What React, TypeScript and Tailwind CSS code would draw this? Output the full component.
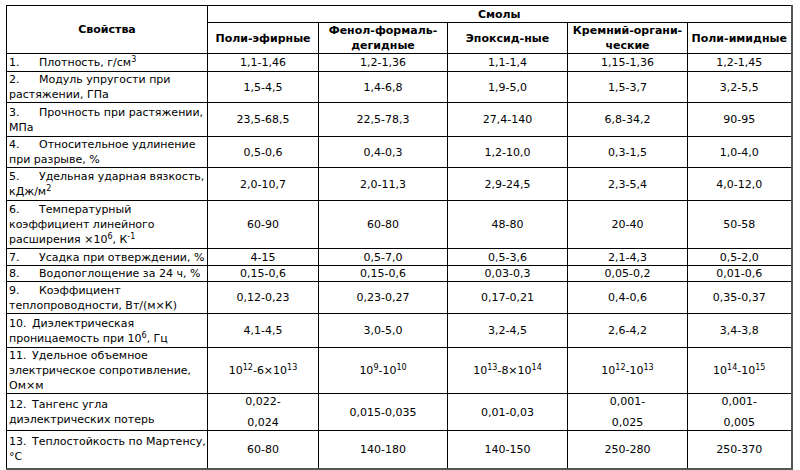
import type { ReactNode } from "react";

type Row = {
  n: string;
  label: ReactNode;
  values: ReactNode[];
  h: string;
};

const S = ({ children }: { children: ReactNode }) => (
  <sup className="text-[8px]">{children}</sup>
);

const Two = ({ a, b }: { a: string; b: string }) => (
  <div className="flex flex-col items-center gap-[6px]">
    <span>{a}</span>
    <span>{b}</span>
  </div>
);

const rows: Row[] = [
  {
    n: "1.",
    label: (
      <>
        Плотность, г/см<S>3</S>
      </>
    ),
    values: ["1,1-1,46", "1,2-1,36", "1,1-1,4", "1,15-1,36", "1,2-1,45"],
    h: "h-[18px]",
  },
  {
    n: "2.",
    label: (
      <>
        Модуль упругости при
        <br />
        растяжении, ГПа
      </>
    ),
    values: ["1,5-4,5", "1,4-6,8", "1,9-5,0", "1,5-3,7", "3,2-5,5"],
    h: "h-[30px]",
  },
  {
    n: "3.",
    label: (
      <>
        Прочность при растяжении,
        <br />
        МПа
      </>
    ),
    values: ["23,5-68,5", "22,5-78,3", "27,4-140", "6,8-34,2", "90-95"],
    h: "h-[34px]",
  },
  {
    n: "4.",
    label: (
      <>
        Относительное удлинение
        <br />
        при разрыве, %
      </>
    ),
    values: ["0,5-0,6", "0,4-0,3", "1,2-10,0", "0,3-1,5", "1,0-4,0"],
    h: "h-[30px]",
  },
  {
    n: "5.",
    label: (
      <>
        Удельная ударная вязкость,
        <br />
        кДж/м<S>2</S>
      </>
    ),
    values: ["2,0-10,7", "2,0-11,3", "2,9-24,5", "2,3-5,4", "4,0-12,0"],
    h: "h-[33px]",
  },
  {
    n: "6.",
    label: (
      <>
        Температурный
        <br />
        коэффициент линейного
        <br />
        расширения ×10<S>6</S>, К<S>-1</S>
      </>
    ),
    values: ["60-90", "60-80", "48-80", "20-40", "50-58"],
    h: "h-[48px]",
  },
  {
    n: "7.",
    label: "Усадка при отверждении, %",
    values: ["4-15", "0,5-7,0", "0,5-3,6", "2,1-4,3", "0,5-2,0"],
    h: "h-[17px]",
  },
  {
    n: "8.",
    label: "Водопоглощение за 24 ч, %",
    values: ["0,15-0,6", "0,15-0,6", "0,03-0,3", "0,05-0,2", "0,01-0,6"],
    h: "h-[16px]",
  },
  {
    n: "9.",
    label: (
      <>
        Коэффициент
        <br />
        теплопроводности, Вт/(м×К)
      </>
    ),
    values: ["0,12-0,23", "0,23-0,27", "0,17-0,21", "0,4-0,6", "0,35-0,37"],
    h: "h-[32px]",
  },
  {
    n: "10.",
    label: (
      <>
        Диэлектрическая
        <br />
        проницаемость при 10<S>6</S>, Гц
      </>
    ),
    values: ["4,1-4,5", "3,0-5,0", "3,2-4,5", "2,6-4,2", "3,4-3,8"],
    h: "h-[34px]",
  },
  {
    n: "11.",
    label: (
      <>
        Удельное объемное
        <br />
        электрическое сопротивление,
        <br />
        Ом×м
      </>
    ),
    values: [
      <>
        10<S>12</S>-6×10<S>13</S>
      </>,
      <>
        10<S>9</S>-10<S>10</S>
      </>,
      <>
        10<S>13</S>-8×10<S>14</S>
      </>,
      <>
        10<S>12</S>-10<S>13</S>
      </>,
      <>
        10<S>14</S>-10<S>15</S>
      </>,
    ],
    h: "h-[43px]",
  },
  {
    n: "12.",
    label: (
      <>
        Тангенс угла
        <br />
        диэлектрических потерь
      </>
    ),
    values: [
      <Two a="0,022-" b="0,024" />,
      "0,015-0,035",
      "0,01-0,03",
      <Two a="0,001-" b="0,025" />,
      <Two a="0,001-" b="0,005" />,
    ],
    h: "h-[37px]",
  },
  {
    n: "13.",
    label: (
      <>
        Теплостойкость по Мартенсу,
        <br />
        °С
      </>
    ),
    values: ["60-80", "140-180", "140-150", "250-280", "250-370"],
    h: "h-[38px]",
  },
];

const cell = "border border-black px-[2px] align-middle";

export default function App() {
  return (
    <div className="w-[800px] h-[470px] bg-white overflow-hidden pt-[5px] pl-[6px] font-['DejaVu_Sans',Verdana,sans-serif] text-[11px] leading-[15px] text-black">
      <table className="border-collapse table-fixed w-[785px] border-r-2 border-b-2 border-r-[#555] border-b-[#555]">
        <colgroup>
          <col className="w-[201px]" />
          <col className="w-[111px]" />
          <col className="w-[129px]" />
          <col className="w-[120px]" />
          <col className="w-[120px]" />
          <col className="w-[104px]" />
        </colgroup>
        <thead>
          <tr className="h-[17px]">
            <th rowSpan={2} className={`${cell} text-center font-bold`}>
              Свойства
            </th>
            <th colSpan={5} className={`${cell} text-center font-bold`}>
              Смолы
            </th>
          </tr>
          <tr className="h-[30px]">
            <th className={`${cell} text-center font-bold whitespace-nowrap`}>Поли-эфирные</th>
            <th className={`${cell} text-center font-bold whitespace-nowrap`}>
              Фенол-формаль-
              <br />
              дегидные
            </th>
            <th className={`${cell} text-center font-bold whitespace-nowrap`}>Эпоксид-ные</th>
            <th className={`${cell} text-center font-bold whitespace-nowrap`}>
              Кремний-органи-
              <br />
              ческие
            </th>
            <th className={`${cell} text-center font-bold whitespace-nowrap px-0`}>Поли-имидные</th>
          </tr>
        </thead>
        <tbody>
          {rows.map((r) => (
            <tr key={r.n} className={r.h}>
              <td className={`${cell} text-left whitespace-nowrap`}>
                <span
                  className={
                    r.n.length > 2 ? "inline-block w-[23px]" : "inline-block w-[30px]"
                  }
                >
                  {r.n}
                </span>
                {r.label}
              </td>
              {r.values.map((v, i) => (
                <td key={i} className={`${cell} text-center whitespace-nowrap`}>
                  {v}
                </td>
              ))}
            </tr>
          ))}
        </tbody>
      </table>
    </div>
  );
}
